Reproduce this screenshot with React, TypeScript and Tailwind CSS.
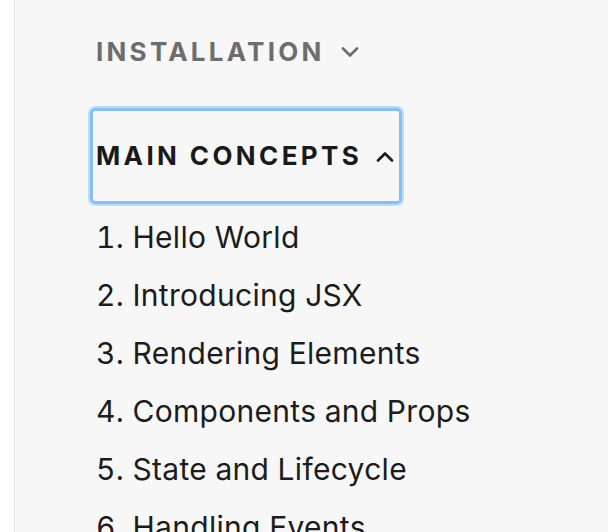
import React from 'react';

const items = [
  'Hello World',
  'Introducing JSX',
  'Rendering Elements',
  'Components and Props',
  'State and Lifecycle',
  'Handling Events',
];

function Chevron({ up, className }: { up?: boolean; className?: string }) {
  return (
    <svg width="18" height="11" viewBox="0 0 18 11" className={className} fill="none">
      <path
        d={up ? 'M2 9.5 L9 2.5 L16 9.5' : 'M2 1.5 L9 8.5 L16 1.5'}
        stroke="currentColor"
        strokeWidth="2.6"
        strokeLinecap="round"
        strokeLinejoin="round"
      />
    </svg>
  );
}

export default function App() {
  return (
    <div
      className="flex w-[608px] h-[532px] overflow-hidden bg-white"
      style={{ fontFamily: 'Inter, "Noto Sans", sans-serif' }}
    >
      <div className="w-[14px] shrink-0 bg-white" />
      <div className="flex-1 border-l border-[#e4e4e4] bg-[#f7f7f7] pl-[75px] pt-[32px]">
        <div className="flex items-center gap-[16px] h-[40px] pl-[6px] text-[#6d6d6d]">
          <span className="text-[26px] font-bold tracking-[0.125em] leading-none">INSTALLATION</span>
          <Chevron />
        </div>

        <div className="mt-[36px] w-[312px] h-[96px] rounded-[5px] border-[3px] border-[#86bff8] ring-2 ring-[#bcdcfc] flex items-center gap-[14px] px-[3px] text-[#1a1a1a]">
          <span className="text-[26px] font-bold tracking-[0.13em] leading-none">MAIN CONCEPTS</span>
          <Chevron up />
        </div>

        <ol className="mt-[4px] pl-[6px] text-[#1c1c1c]">
          {items.map((t, i) => (
            <li key={t} className="text-[30px] tracking-[0.01em] leading-[58px] whitespace-nowrap tabular-nums">
              {i + 1}. {t}
            </li>
          ))}
        </ol>
      </div>
    </div>
  );
}
